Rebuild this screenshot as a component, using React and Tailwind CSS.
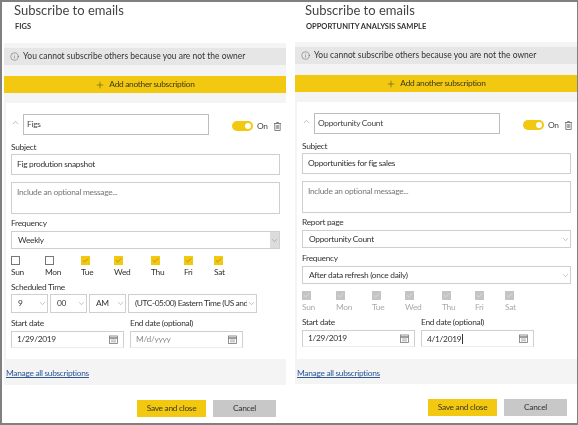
import React from 'react';
import { ChevronDown, ChevronUp, Plus, Info, Check } from 'lucide-react';

const DAYS = ['Sun', 'Mon', 'Tue', 'Wed', 'Thu', 'Fri', 'Sat'];
const DAY_X = ['w-[34px]', 'w-[36px]', 'w-[33px]', 'w-[37px]', 'w-[33px]', 'w-[30px]', 'w-[30px]'];

const Label = ({ className = '', children }) => (
  <div className={`h-3 text-[8.4px] leading-3 text-[#333] ${className}`}>{children}</div>
);

const Box = ({ className = '', children }) => (
  <div className={`flex items-center border border-[#cfcfcf] bg-white text-[8.4px] text-[#333] ${className}`}>{children}</div>
);

const Select = ({ className = '', labelClass = '', label, shaded }) => (
  <Box className={`justify-between ${className}`}>
    <span className={`overflow-hidden pl-[6px] whitespace-nowrap ${labelClass}`}>{label}</span>
    <span className={`flex h-full w-[9px] shrink-0 items-center justify-center ${shaded ? 'bg-[#dcdcdc]' : ''}`}>
      <ChevronDown size={9} strokeWidth={1} className="shrink-0 text-[#666]" />
    </span>
  </Box>
);

const CalendarIcon = () => (
  <svg width="9" height="9" viewBox="0 0 9 9" fill="none" stroke="#777" strokeWidth="0.8" className="shrink-0">
    <rect x="0.5" y="1" width="8" height="7.5" />
    <path d="M0.5 3h8" strokeWidth="1.4" />
    <path d="M2 5h5M2 6.8h5" strokeWidth="0.6" />
  </svg>
);

const TrashIcon = () => (
  <svg width="7" height="9" viewBox="0 0 7 9" fill="none" stroke="#666" strokeWidth="0.8" className="shrink-0">
    <path d="M0 1.5h7M2.5 1.5V.5h2v1" />
    <path d="M.8 1.5v7h5.4v-7" />
    <path d="M2.4 3v4M3.5 3v4M4.6 3v4" strokeWidth="0.6" />
  </svg>
);

const DateBox = ({ className = '', value, placeholder, caret }) => (
  <div className={`flex h-[17px] items-center justify-between border border-[#cfcfcf] border-b-[#ececec] pr-[5px] pl-[5px] text-[8.4px] ${className}`}>
    <span className={placeholder ? 'text-[#8a8a8a]' : 'text-[#333]'}>
      {value || placeholder}
      {caret && <span className="ml-px inline-block h-[10px] w-px translate-y-[2px] bg-[#333]" />}
    </span>
    <CalendarIcon />
  </div>
);

const DayRow = ({ className = '', checked, disabled }) => (
  <div className={`flex ${className}`}>
    {DAYS.map((day, i) => {
      const on = checked.includes(day);
      return (
        <div key={day} className={DAY_X[i]}>
          <div
            className={`flex h-[9px] w-[9px] items-center justify-center ${
              disabled ? 'bg-[#c4c4c4]' : on ? 'bg-[#f2c811]' : 'border border-[#777] bg-white'
            }`}
          >
            {(on || disabled) && <Check size={7} strokeWidth={1.5} className={disabled ? 'text-white' : 'text-[#6b5a10]'} />}
          </div>
          <div className={`mt-px h-3 text-[8.4px] leading-3 ${disabled ? 'text-[#aaa]' : 'text-[#333]'}`}>{day}</div>
        </div>
      );
    })}
  </div>
);

const Panel = ({ title, subtitle, name, outerClass, headClass, stripClass, cardClass, children }) => (
  <div className={`flex flex-col ${outerClass}`}>
    <div className={headClass}>
      <div className="text-[13px] leading-[17px] tracking-normal text-[#444]">{title}</div>
      <div className="mt-[2px] pl-px text-[7.5px] leading-[11px] font-bold tracking-normal text-[#333]">{subtitle}</div>
    </div>

    <div className="bg-[#f4f4f4] pt-[5px]">
      <div className="flex h-[17px] items-center gap-[4px] bg-[#e6e6e6] pl-[6px] text-[8.5px] tracking-normal text-[#333]">
        <Info size={9} strokeWidth={1} className="shrink-0 text-[#333]" />
        <span>You cannot subscribe others because you are not the owner</span>
      </div>
      <div className="mt-[11px] flex h-[17px] items-center justify-center gap-[4px] bg-[#f2c811] text-[8.4px] text-[#3d3a1c]">
        <Plus size={10} strokeWidth={1} className="text-[#222]" />
        <span>Add another subscription</span>
      </div>

      <div className={`mt-[10px] ml-[2px] bg-white pt-[11px] pr-[6px] pl-[5px] ${cardClass}`}>
        <div className="flex h-[21px] items-start">
          <div className="flex h-[15px] w-3 shrink-0 items-start pt-[4px]">
            <ChevronUp size={9} strokeWidth={1} className="text-[#555]" />
          </div>
          <div className="flex h-[21px] w-[186px] shrink-0 items-center border border-[#bdbdbd] pl-[3px] text-[8.4px] text-[#444]">{name}</div>
          <div className="ml-[23px] flex h-[10px] items-center pt-[12px]">
            <div className="flex h-[10px] w-[21px] shrink-0 items-center justify-end rounded-full bg-[#f2c811] pr-[2px]">
              <div className="h-[6px] w-[6px] rounded-full bg-white" />
            </div>
            <span className="ml-1 text-[8.4px] text-[#444]">On</span>
            <span className="ml-[6px]"><TrashIcon /></span>
          </div>
        </div>
        {children}
      </div>

      <div className={`pl-[2px] text-[8.4px] text-[#2b5797] underline ${stripClass}`}>Manage all subscriptions</div>
    </div>

    <div className="mt-[15px] flex">
      <button className="ml-[133px] h-[17px] w-[69px] bg-[#f2c811] text-[8.4px] tracking-[-0.3px] text-[#3d3a1c]">Save and close</button>
      <button className="ml-[7px] h-[17px] w-[63px] bg-[#c8c8c8] text-[8.4px] tracking-[-0.3px] text-[#333]">Cancel</button>
    </div>
  </div>
);

export default function App() {
  return (
    <div className="flex h-[425px] w-[578px] overflow-hidden border-t-2 border-r border-b-2 border-l-2 border-[#808080] bg-white font-['Lato',sans-serif] tracking-[-0.3px] blur-[0.35px]">
      <Panel
        title="Subscribe to emails"
        subtitle="FIGS"
        name="Figs"
        outerClass="w-[289px] pl-[2px] pr-[5px]"
        headClass="h-[41px] pl-[10px]"
        stripClass="flex h-[26px] items-center pt-[3px]"
      >
        <Label className="mt-[6px]">Subject</Label>
        <Box className="mt-px h-[21px] pl-[5px]">Fig prodution snapshot</Box>
        <Box className="mt-[7px] h-[32px] items-start pt-[3px] pl-[5px] text-[#777]">Include an optional message...</Box>
        <Label className="mt-[3px]">Frequency</Label>
        <Select className="mt-[2px] h-[18px]" label="Weekly" shaded />
        <DayRow className="mt-[7px]" checked={['Tue', 'Wed', 'Thu', 'Fri', 'Sat']} />
        <Label className="mt-[3px]">Scheduled Time</Label>
        <div className="mt-px flex h-[19px] gap-[2px]">
          <Select className="w-[37px]" label="9" />
          <Select className="w-[37px]" label="00" />
          <Select className="w-[37px]" label="AM" />
          <Select className="w-[129px]" labelClass="tracking-[-0.42px]" label="(UTC-05:00) Eastern Time (US and" />
        </div>
        <div className="mt-[4px] flex gap-[6px]">
          <Label className="w-[113px]">Start date</Label>
          <Label>End date (optional)</Label>
        </div>
        <div className="mt-[2px] flex gap-[6px] pb-[11px]">
          <DateBox className="w-[113px]" value="1/29/2019" />
          <DateBox className="w-[113px]" placeholder="M/d/yyyy" />
        </div>
      </Panel>

      <Panel
        title="Subscribe to emails"
        subtitle="OPPORTUNITY ANALYSIS SAMPLE"
        name="Opportunity Count"
        outerClass="w-[286px] pl-[4px]"
        headClass="h-[40px] pl-[10px]"
        stripClass="flex h-[25px] items-center pt-[4px]"
      >
        <Label className="mt-[6px]">Subject</Label>
        <Box className="mt-px h-[21px] pl-[5px]">Opportunities for fig sales</Box>
        <Box className="mt-[7px] h-[32px] items-start pt-[3px] pl-[5px] text-[#777]">Include an optional message...</Box>
        <Label className="mt-[3px]">Report page</Label>
        <Select className="mt-[2px] h-[18px]" label="Opportunity Count" />
        <Label className="mt-[4px]">Frequency</Label>
        <Select className="mt-[2px] h-[18px]" label="After data refresh (once daily)" />
        <DayRow className="mt-[7px]" checked={[]} disabled />
        <div className="mt-[3px] flex gap-[6px]">
          <Label className="w-[113px]">Start date</Label>
          <Label>End date (optional)</Label>
        </div>
        <div className="mt-[2px] flex gap-[6px] pb-[12px]">
          <DateBox className="w-[113px]" value="1/29/2019" />
          <DateBox className="w-[113px]" value="4/1/2019" caret />
        </div>
      </Panel>
    </div>
  );
}
